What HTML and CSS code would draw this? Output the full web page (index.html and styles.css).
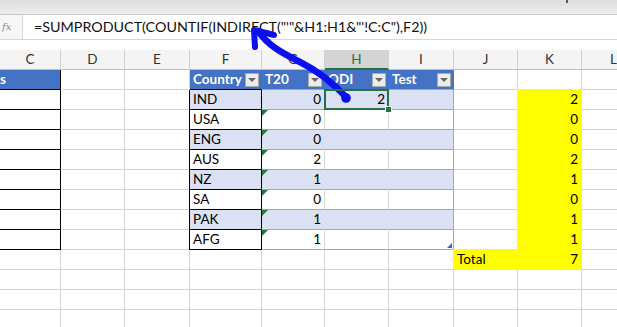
FILE: index.html
```html
<!DOCTYPE html>
<html>
<head>
<meta charset="utf-8">
<link rel="stylesheet" href="styles.css">
</head>
<body>
<div class="app">
  <div class="strip"><span class="mark"></span></div>
  <div class="fbar">
    <div class="fx">fx</div>
    <div class="formula">=SUMPRODUCT(COUNTIF(INDIRECT("'"&amp;H1:H1&amp;"'!C:C"),F2))</div>
  </div>
  <div class="gap"></div>
  <div class="sheet">
    <!-- column headers -->
    <div class="ch">C</div><div class="ch">D</div><div class="ch">E</div><div class="ch">F</div><div class="ch">G</div><div class="ch ch-sel">H</div><div class="ch">I</div><div class="ch">J</div><div class="ch">K</div><div class="ch">L</div>
    <!-- row 1 -->
    <div class="cell th blk-r blk-b"><span class="cut">s</span></div><div class="cell"></div><div class="cell"></div>
    <div class="cell th blk-b"><span>Country</span><span class="dd"></span></div>
    <div class="cell th th-b"><span>T20</span><span class="dd"></span></div>
    <div class="cell th th-b"><span>ODI</span><span class="dd"></span></div>
    <div class="cell th th-b"><span>Test</span><span class="dd"></span></div>
    <div class="cell"></div><div class="cell"></div><div class="cell"></div>
    <!-- row 2 -->
    <div class="cell blk-r blk-b"></div><div class="cell"></div><div class="cell"></div>
    <div class="cell band fcell">IND</div>
    <div class="cell band num">0</div>
    <div class="cell band num sel">2<span class="handle"></span></div>
    <div class="cell band tend"></div>
    <div class="cell"></div><div class="cell yel num">2</div><div class="cell"></div>
    <!-- row 3 -->
    <div class="cell blk-r blk-b"></div><div class="cell"></div><div class="cell"></div>
    <div class="cell trow fcell">USA</div>
    <div class="cell trow num tri">0</div>
    <div class="cell trow"></div>
    <div class="cell trow tend"></div>
    <div class="cell"></div><div class="cell yel num">0</div><div class="cell"></div>
    <!-- row 4 -->
    <div class="cell blk-r blk-b"></div><div class="cell"></div><div class="cell"></div>
    <div class="cell band fcell">ENG</div>
    <div class="cell band num tri">0</div>
    <div class="cell band"></div>
    <div class="cell band tend"></div>
    <div class="cell"></div><div class="cell yel num">0</div><div class="cell"></div>
    <!-- row 5 -->
    <div class="cell blk-r blk-b"></div><div class="cell"></div><div class="cell"></div>
    <div class="cell trow fcell">AUS</div>
    <div class="cell trow num tri">2</div>
    <div class="cell trow"></div>
    <div class="cell trow tend"></div>
    <div class="cell"></div><div class="cell yel num">2</div><div class="cell"></div>
    <!-- row 6 -->
    <div class="cell blk-r blk-b"></div><div class="cell"></div><div class="cell"></div>
    <div class="cell band fcell">NZ</div>
    <div class="cell band num tri">1</div>
    <div class="cell band"></div>
    <div class="cell band tend"></div>
    <div class="cell"></div><div class="cell yel num">1</div><div class="cell"></div>
    <!-- row 7 -->
    <div class="cell blk-r blk-b"></div><div class="cell"></div><div class="cell"></div>
    <div class="cell trow fcell">SA</div>
    <div class="cell trow num tri">0</div>
    <div class="cell trow"></div>
    <div class="cell trow tend"></div>
    <div class="cell"></div><div class="cell yel num">0</div><div class="cell"></div>
    <!-- row 8 -->
    <div class="cell blk-r blk-b"></div><div class="cell"></div><div class="cell"></div>
    <div class="cell band fcell">PAK</div>
    <div class="cell band num tri">1</div>
    <div class="cell band"></div>
    <div class="cell band tend"></div>
    <div class="cell"></div><div class="cell yel num">1</div><div class="cell"></div>
    <!-- row 9 -->
    <div class="cell blk-r blk-b"></div><div class="cell"></div><div class="cell"></div>
    <div class="cell trow fcell">AFG</div>
    <div class="cell trow num tri">1</div>
    <div class="cell trow"></div>
    <div class="cell trow tend resize"></div>
    <div class="cell"></div><div class="cell yel num">1</div><div class="cell"></div>
    <!-- row 10 -->
    <div class="cell"></div><div class="cell"></div><div class="cell"></div><div class="cell"></div><div class="cell"></div><div class="cell"></div><div class="cell"></div>
    <div class="cell yel">Total</div><div class="cell yel num">7</div><div class="cell"></div>
    <!-- row 11 -->
    <div class="cell"></div><div class="cell"></div><div class="cell"></div><div class="cell"></div><div class="cell"></div><div class="cell"></div><div class="cell"></div><div class="cell"></div><div class="cell"></div><div class="cell"></div>
    <!-- row 12 -->
    <div class="cell"></div><div class="cell"></div><div class="cell"></div><div class="cell"></div><div class="cell"></div><div class="cell"></div><div class="cell"></div><div class="cell"></div><div class="cell"></div><div class="cell"></div>
    <!-- row 13 -->
    <div class="cell"></div><div class="cell"></div><div class="cell"></div><div class="cell"></div><div class="cell"></div><div class="cell"></div><div class="cell"></div><div class="cell"></div><div class="cell"></div><div class="cell"></div>
  </div>
  <svg class="arrow" width="617" height="327" viewBox="0 0 617 327">
    <path d="M258 31 C 268 45, 280 52, 300 62 S 335 85, 347 98" fill="none" stroke="#0c10f0" stroke-width="6.5" stroke-linecap="round" stroke-linejoin="round"/>
    <path d="M255 47 L254 30 L274 35" fill="none" stroke="#0c10f0" stroke-width="6" stroke-linecap="round" stroke-linejoin="round"/>
    <circle cx="346" cy="98" r="4.8" fill="#0c10f0"/>
  </svg>
</div>
</body>
</html>
```

FILE: styles.css
```css
html, body {
  margin: 0;
  padding: 0;
  background: #fff;
}

.app {
  position: relative;
  width: 617px;
  height: 327px;
  overflow: hidden;
  font-family: "Lato", "Liberation Sans", sans-serif;
  font-size: 13.5px;
  color: #000;
}

.strip {
  height: 14px;
  background: linear-gradient(#dedede, #ededed);
  border-bottom: 1px solid #c8c8c8;
  display: flex;
}

.mark {
  width: 2px;
  height: 3px;
  background: #555;
  margin-left: 566px;
}

.fbar {
  height: 24px;
  display: flex;
  border-bottom: 1px solid #d6d6d6;
}

.fx {
  width: 23px;
  box-sizing: border-box;
  padding-left: 2px;
  background: #f6f6f6;
  border-right: 1px solid #d6d6d6;
  font-family: "DejaVu Serif", serif;
  font-style: italic;
  font-size: 10px;
  color: #8a8a8a;
  line-height: 24px;
}

.formula {
  padding-left: 11px;
  font-size: 14.3px;
  line-height: 24px;
  white-space: nowrap;
  color: #111;
}

.gap {
  height: 10px;
}

.sheet {
  display: grid;
  grid-template-columns: 61px 64px 65px 72px 63px 64px 65px 64px 64px 64px;
  grid-auto-rows: 20px;
  width: 646px;
}

.ch {
  box-sizing: border-box;
  background: #f4f4f4;
  border-right: 1px solid #d0d0d0;
  border-bottom: 1px solid #bdbdbd;
  text-align: center;
  line-height: 19px;
  color: #333;
}

.ch-sel {
  background: #d4d4d4;
  color: #217346;
  border-bottom: 2px solid #217346;
  line-height: 18px;
}

.cell {
  box-sizing: border-box;
  position: relative;
  border-right: 1px solid #d4d4d4;
  border-bottom: 1px solid #d4d4d4;
  padding: 0 3px;
  line-height: 19px;
  white-space: nowrap;
  overflow: visible;
}

.num {
  text-align: right;
}

.th {
  background: #4472c4;
  color: #fff;
  font-weight: bold;
  border-right-color: #4472c4;
  border-bottom-color: #4472c4;
  display: flex;
  justify-content: space-between;
  align-items: center;
  padding: 0 2px 0 3px;
  overflow: hidden;
}

.th-b {
  border-bottom-color: #8ea9db;
}

.cut {
  margin-left: -3px;
}

.dd {
  box-sizing: border-box;
  width: 14px;
  height: 14px;
  background: #ececec;
  border: 1px solid #a9a9a9;
  display: flex;
  align-items: center;
  justify-content: center;
}

.dd::after {
  content: "";
  border-left: 4px solid transparent;
  border-right: 4px solid transparent;
  border-top: 4px solid #666;
}

.blk-r {
  border-right-color: #000;
}

.blk-b {
  border-bottom-color: #000;
}

.band {
  background: #d9e1f2;
  border-right-color: #d9e1f2;
  border-bottom-color: #8ea9db;
}

.trow {
  border-bottom-color: #8ea9db;
}

.tend {
  border-right-color: #8ea9db;
}

.fcell {
  border-right-color: #000;
  border-bottom-color: #000;
  box-shadow: -1px 0 0 #000;
}

.yel {
  background: #ffff00;
  border-right-color: #ffff00;
  border-bottom-color: #ffff00;
  box-shadow: -1px -1px 0 #ffff00;
}

.tri::before {
  content: "";
  position: absolute;
  left: 0;
  top: 0;
  border-top: 6px solid #1e7a3e;
  border-right: 6px solid transparent;
}

.sel::after {
  content: "";
  position: absolute;
  left: -1px;
  top: -1px;
  right: -1px;
  bottom: -1px;
  border: 2px solid #217346;
  z-index: 2;
}

.handle {
  position: absolute;
  right: -4px;
  bottom: -4px;
  width: 5px;
  height: 5px;
  background: #217346;
  border: 1px solid #fff;
  z-index: 3;
}

.resize::after {
  content: "";
  position: absolute;
  right: 1px;
  bottom: 1px;
  border-bottom: 5px solid #3f63b0;
  border-left: 5px solid transparent;
}

.arrow {
  position: absolute;
  left: 0;
  top: 0;
  pointer-events: none;
}
```
